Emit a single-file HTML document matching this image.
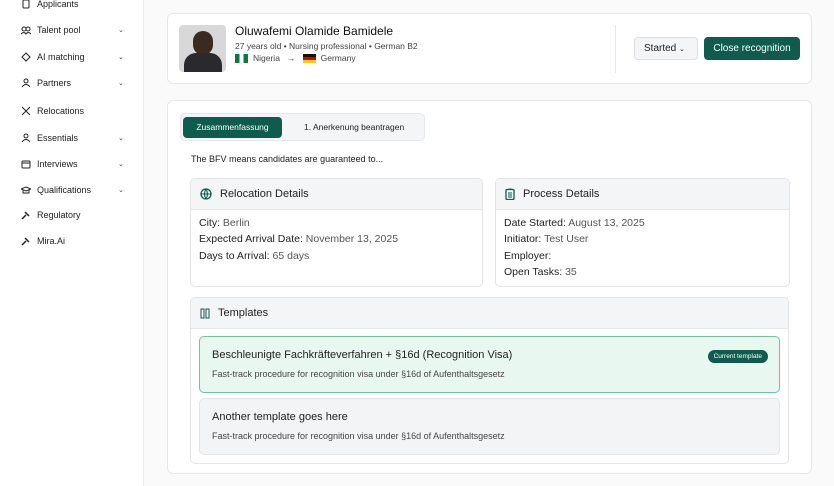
<!DOCTYPE html>
<html><head><meta charset="utf-8"><style>
*{box-sizing:border-box;margin:0;padding:0}
body{width:834px;height:486px;overflow:hidden;background:#fafafa;font-family:"Liberation Sans",sans-serif;color:#1f2937;position:relative}
.side{position:absolute;left:0;top:0;width:144px;height:486px;background:#fff;border-right:1px solid #ececec}
.it{position:absolute;left:21px;font-size:9px;color:#222;display:flex;align-items:center}
.it svg{width:10px;height:10px;margin-right:6px}
.it .ch{position:absolute;left:97px;font-size:7px;color:#444}
.card{position:absolute;background:#fff;border:1px solid #e5e7eb;border-radius:6px}
.abs{position:absolute}
.box{position:absolute;border:1px solid #e2e4e8;border-radius:5px;background:#fff;overflow:hidden}
.hd{height:31px;background:#f4f5f7;border-bottom:1px solid #e6e7ea;display:flex;align-items:center;padding-left:9px;font-size:11px;color:#222}
.hd svg{margin-right:8px}
.bd{padding:5px 8px;font-size:10.5px;line-height:16.3px;color:#555}
.bd b{color:#222;font-weight:normal}
.tp{position:absolute;left:8px;width:581px;height:57px;border-radius:5px;padding:12px 12px}
.tp .t{font-size:11px;color:#222}
.tp .s{font-size:9px;color:#444;margin-top:8px}
</style></head><body>
<div class="side">
<div class="it" style="top:-1px"><svg viewBox="0 0 10 10"><rect x="2" y="1" width="6" height="8" rx="1" fill="none" stroke="#222"/></svg>Applicants</div>
<div class="it" style="top:25px"><svg viewBox="0 0 10 10"><circle cx="3" cy="4" r="2" fill="none" stroke="#222"/><circle cx="7" cy="4" r="2" fill="none" stroke="#222"/><path d="M0 9q3-3 5 0q2-3 5 0" fill="none" stroke="#222"/></svg>Talent pool<span class="ch">⌄</span></div>
<div class="it" style="top:52px"><svg viewBox="0 0 10 10"><path d="M5 1l4 4-4 4-4-4z" fill="none" stroke="#222"/></svg>AI matching<span class="ch">⌄</span></div>
<div class="it" style="top:78px"><svg viewBox="0 0 10 10"><circle cx="5" cy="3" r="2" fill="none" stroke="#222"/><path d="M1 9q4-5 8 0" fill="none" stroke="#222"/></svg>Partners<span class="ch">⌄</span></div>
<div class="it" style="top:106px"><svg viewBox="0 0 10 10"><path d="M1 1l8 8M9 1l-8 8" stroke="#222"/></svg>Relocations</div>
<div class="it" style="top:133px"><svg viewBox="0 0 10 10"><circle cx="5" cy="3" r="2" fill="none" stroke="#222"/><path d="M1 9q4-5 8 0" fill="none" stroke="#222"/></svg>Essentials<span class="ch">⌄</span></div>
<div class="it" style="top:159px"><svg viewBox="0 0 10 10"><rect x="1" y="2" width="8" height="7" rx="1" fill="none" stroke="#222"/><path d="M1 4h8" stroke="#222"/></svg>Interviews<span class="ch">⌄</span></div>
<div class="it" style="top:185px"><svg viewBox="0 0 10 10"><path d="M0 4l5-2 5 2-5 2z" fill="none" stroke="#222"/><path d="M2 5v3h6V5" fill="none" stroke="#222"/></svg>Qualifications<span class="ch">⌄</span></div>
<div class="it" style="top:210px"><svg viewBox="0 0 10 10"><path d="M1 9l4-4M4 2l4 4" stroke="#222" stroke-width="1.5"/></svg>Regulatory</div>
<div class="it" style="top:236px"><svg viewBox="0 0 10 10"><path d="M1 9l4-4M4 2l4 4" stroke="#222" stroke-width="1.5"/></svg>Mira.Ai</div>
</div>

<div class="card" style="left:167px;top:13px;width:645px;height:71px">
<div class="abs" style="left:11px;top:11px;width:47px;height:47px;border-radius:4px;background:#d8d8d8;overflow:hidden"><div style="position:absolute;left:14px;top:6px;width:20px;height:24px;border-radius:10px;background:#3a2a20"></div><div style="position:absolute;left:5px;top:28px;width:38px;height:25px;border-radius:12px 12px 0 0;background:#2a2a2e"></div></div>
<div class="abs" style="left:67px;top:10px;font-size:12px;color:#111">Oluwafemi Olamide Bamidele</div>
<div class="abs" style="left:67px;top:27px;font-size:8.5px;color:#444">27 years old • Nursing professional • German B2</div>
<div class="abs" style="left:67px;top:39px;font-size:8.5px;color:#444;display:flex;align-items:center"><span style="display:inline-block;width:13px;height:9px;background:linear-gradient(90deg,#0a7a3e 33%,#fff 33% 66%,#0a7a3e 66%);margin-right:5px"></span>Nigeria&nbsp;&nbsp;&nbsp;→&nbsp;&nbsp;&nbsp;<span style="display:inline-block;width:13px;height:9px;background:linear-gradient(#111 33%,#d00 33% 66%,#fc0 66%);margin-right:5px"></span>Germany</div>
<div class="abs" style="left:447px;top:11px;width:1px;height:48px;background:#e5e7eb"></div>
<div class="abs" style="left:466px;top:23px;width:64px;height:23px;border:1px solid #dcdde0;border-radius:4px;background:#f4f5f7;font-size:10px;color:#222;line-height:21px;padding-left:9px">Started <span style="font-size:7px">⌄</span></div>
<div class="abs" style="left:536px;top:23px;width:96px;height:23px;border-radius:4px;background:#0d5c4e;color:#fff;font-size:10px;line-height:23px;text-align:center">Close recognition</div>
</div>

<div class="card" style="left:167px;top:100px;width:645px;height:374px">
<div class="abs" style="left:12px;top:12px;width:245px;height:28px;border:1px solid #e5e7eb;border-radius:5px;background:#f4f5f7"></div>
<div class="abs" style="left:15px;top:16px;width:99px;height:21px;border-radius:4px;background:#0d5c4e;color:#fff;font-size:8.5px;line-height:21px;text-align:center">Zusammenfassung</div>
<div class="abs" style="left:136px;top:16px;font-size:8.5px;line-height:21px;color:#222">1. Anerkenung beantragen</div>
<div class="abs" style="left:23px;top:53px;font-size:9px;color:#222">The BFV means candidates are guaranteed to...</div>

<div class="box" style="left:22px;top:77px;width:293px;height:109px">
<div class="hd"><svg width="12" height="12" viewBox="0 0 12 12"><circle cx="6" cy="6" r="5" fill="none" stroke="#0d5c4e" stroke-width="1.3"/><path d="M1 6h10M6 1q-3 5 0 10M6 1q3 5 0 10" fill="none" stroke="#0d5c4e" stroke-width="1.1"/></svg>Relocation Details</div>
<div class="bd"><b>City:</b> Berlin<br><b>Expected Arrival Date:</b> November 13, 2025<br><b>Days to Arrival:</b> 65 days</div>
</div>
<div class="box" style="left:327px;top:77px;width:295px;height:109px">
<div class="hd"><svg width="10" height="12" viewBox="0 0 10 12"><rect x="1" y="1.5" width="8" height="10" rx="1" fill="none" stroke="#0d5c4e" stroke-width="1.3"/><path d="M3 5h4M3 7h4M3 9h4M3.5 1h3" stroke="#0d5c4e"/></svg>Process Details</div>
<div class="bd"><b>Date Started:</b> August 13, 2025<br><b>Initiator:</b> Test User<br><b>Employer:</b><br><b>Open Tasks:</b> 35</div>
</div>

<div class="box" style="left:22px;top:196px;width:599px;height:167px">
<div class="hd" style="height:31px"><svg width="10" height="11" viewBox="0 0 10 11"><rect x="1" y="1" width="3" height="9" fill="none" stroke="#0d5c4e"/><rect x="6" y="1" width="3" height="9" fill="none" stroke="#0d5c4e"/></svg>Templates</div>
<div class="tp" style="top:38px;background:#e8f8f1;border:1px solid #6cc4a0">
<div class="t">Beschleunigte Fachkräfteverfahren + §16d (Recognition Visa)</div>
<div class="s">Fast-track procedure for recognition visa under §16d of Aufenthaltsgesetz</div>
<div class="abs" style="right:11px;top:13px;height:13px;padding:0 6px;border-radius:7px;background:#0d5c4e;color:#fff;font-size:6.5px;line-height:13px">Current template</div>
</div>
<div class="tp" style="top:100px;background:#f3f4f6;border:1px solid #e2e4e8">
<div class="t">Another template goes here</div>
<div class="s">Fast-track procedure for recognition visa under §16d of Aufenthaltsgesetz</div>
</div>
</div>
</div>
</body></html>
